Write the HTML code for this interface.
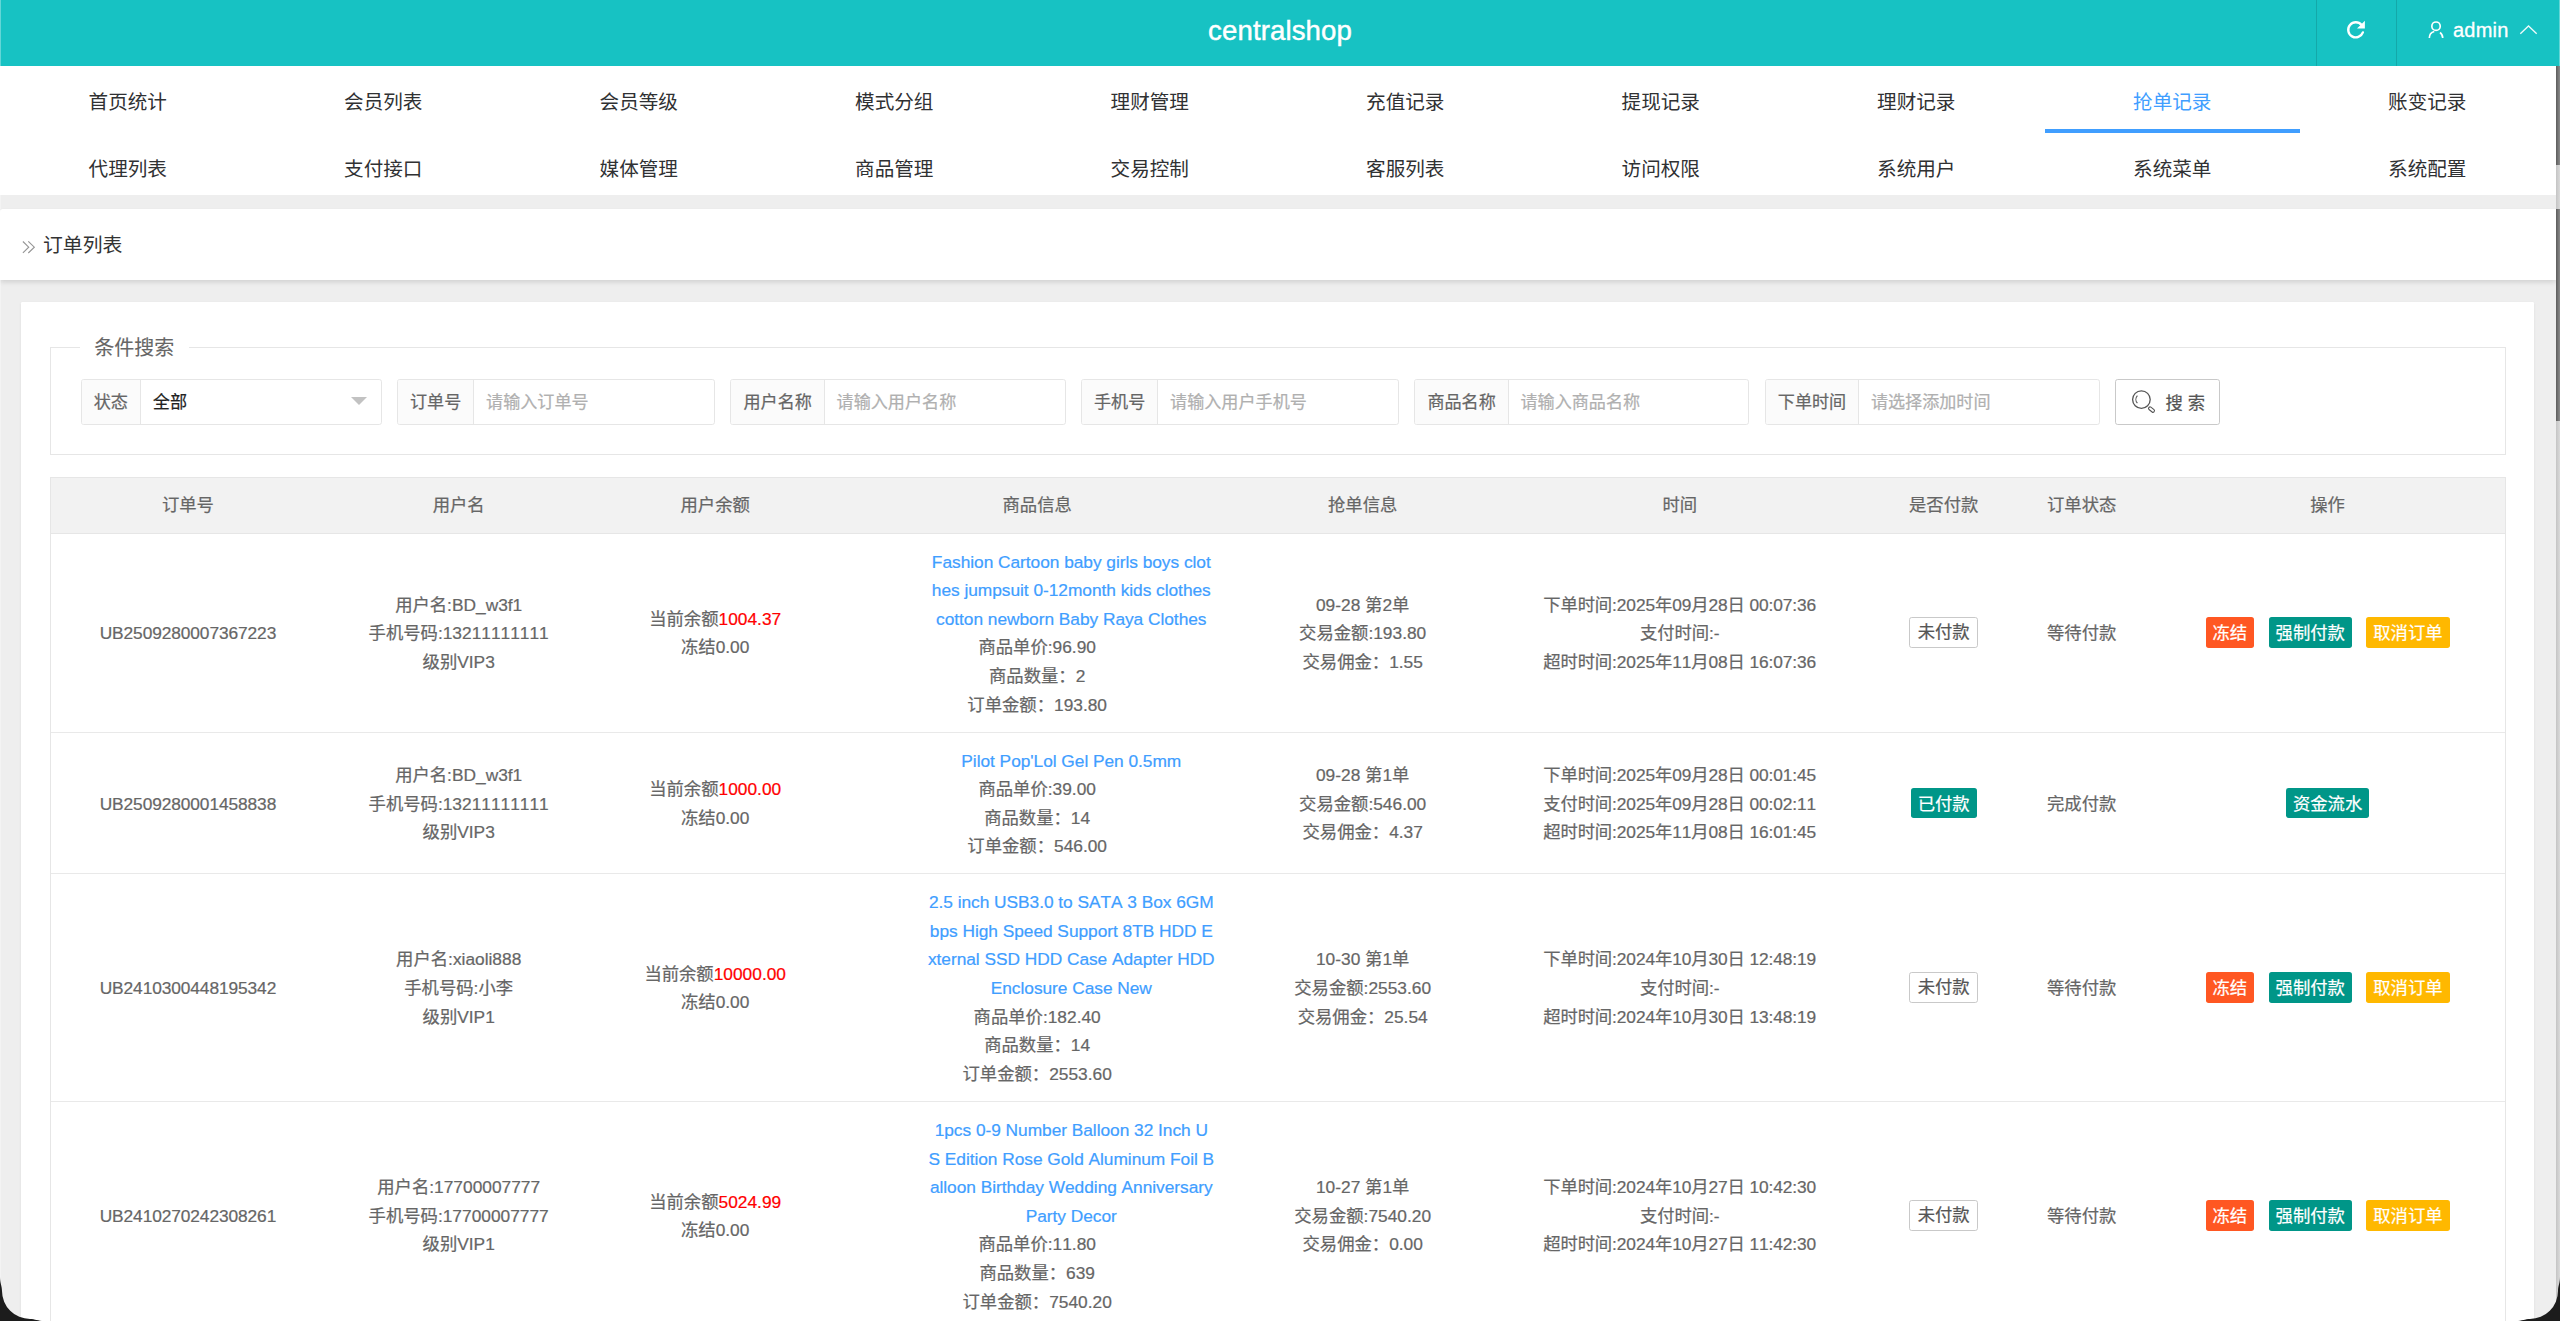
<!DOCTYPE html>
<html lang="zh-CN">
<head>
<meta charset="utf-8">
<title>centralshop</title>
<style>
*{box-sizing:border-box;margin:0;padding:0}
html,body{width:2560px;height:1321px;overflow:hidden}
body{position:relative;background:#eeeeee;font-family:"Liberation Sans","Noto Sans CJK SC",sans-serif;color:#666;font-size:17.33px;font-kerning:none;-webkit-text-stroke:.22px currentColor}
a{text-decoration:none}
/* header */
.hd{position:absolute;left:0;top:0;width:2560px;height:65.7px;background:#17c2c3}
.hd .ttl{position:absolute;left:0;width:2560px;top:0;height:65.7px;line-height:61px;text-align:center;color:#fff;font-size:27.6px;letter-spacing:.1px;-webkit-text-stroke:.45px #fff}
.hd .sep{position:absolute;top:0;width:1.4px;height:65.7px;background:rgba(0,0,0,.13)}
.hd .adm{position:absolute;left:2453px;top:0;height:65.7px;line-height:61.5px;color:#fff;font-size:20px;letter-spacing:.2px;-webkit-text-stroke:.3px #fff}
.hd svg{position:absolute;overflow:visible}
/* nav */
.nav{position:absolute;left:0;top:65.7px;width:2556px;height:129.3px;background:#fff;overflow:hidden}
.nav .it{position:absolute;width:255.5px;height:67.4px;line-height:72px;text-align:center;font-size:19.6px;color:#303133}
.nav .it.on{color:#409eff}
.nav .it.on:after{content:"";position:absolute;left:0;bottom:0;width:100%;height:4.2px;background:#409eff}
/* scrollbars */
.sb{position:absolute;left:2556px;width:4px}.sb.t{background:linear-gradient(90deg,#c4c4c4,#dadada)}.sb.h{background:linear-gradient(90deg,#5c5c5c,#8c8c8c)}
/* crumb */
.crumb{position:absolute;left:0;top:208.8px;width:2556px;height:71.2px;background:#fff;border-radius:2.7px 0 0 0;box-shadow:0 1.5px 5.5px rgba(0,0,0,.13);clip-path:inset(0 0 -14px 0)}
.crumb .tx{position:absolute;left:43px;top:0;height:71.2px;line-height:72.4px;font-size:19.85px;color:#333}
.crumb svg{position:absolute;overflow:visible}
/* card */
.card{position:absolute;left:21.3px;top:301.9px;width:2512.7px;height:1100px;background:#fff;border-radius:1.2px;box-shadow:0 1.3px 3px rgba(0,0,0,.07)}
.fs{position:absolute;left:50.2px;top:347px;width:2455.6px;height:107.6px;border:1.35px solid #e6e6e6}
.lg{position:absolute;left:80px;top:330px;width:108.7px;height:36px;line-height:37px;background:#fff;text-align:center;font-size:20px;color:#666}
.grp{position:absolute;top:379.3px;height:45.4px;border:1.35px solid #e6e6e6;border-radius:2.7px;background:#fff;overflow:hidden}
.grp .lb{position:absolute;left:0;top:0;height:100%;background:#fbfbfb;border-right:1.35px solid #e6e6e6;text-align:center;line-height:46.6px;color:#666;white-space:nowrap;font-size:17.1px}
.grp .ph{position:absolute;top:0;height:100%;line-height:46.6px;color:#b0b0b0;white-space:nowrap;font-size:17.1px}
.grp .val{position:absolute;top:0;height:100%;line-height:46.6px;color:#222;white-space:nowrap;font-size:17.1px}
.tri{position:absolute;width:0;height:0;border-left:8px solid transparent;border-right:8px solid transparent;border-top:8.5px solid #c2c2c2}
.sbtn{position:absolute;left:2115.2px;top:379.3px;width:104.8px;height:45.4px;border:1.35px solid #c9c9c9;border-radius:2.7px;background:#fff;color:#555}
.sbtn span{position:absolute;left:49.3px;top:0;line-height:46.6px;white-space:pre}
.sbtn svg{position:absolute;overflow:visible}
/* table */
.tb{position:absolute;left:50.2px;top:477.1px;width:2455.6px;height:900px;border:1.35px solid #e6e6e6;border-bottom:0}
.tr{display:flex;align-items:center;width:100%;border-bottom:1.35px solid #e9e9e9;line-height:28.6px}
.th{height:56.4px;background:#f2f2f2;border-bottom:1.35px solid #e6e6e6}
.tr>div{flex:none;text-align:center;white-space:nowrap}
.c1{width:273.5px;letter-spacing:-.1px}.c2{width:268px}.c3{width:245px}.c4{width:399px}.c5{width:250px;padding-left:2px}.c6{width:386px;letter-spacing:-.1px}.c7{width:142px}.c8{width:134px}.c9{width:355.4px;padding-left:2.4px}
.r2>div{padding-top:1px}.r3>div{padding-top:1.6px}.r4>div{padding-top:2px}
.nav .it,.crumb .tx{-webkit-text-stroke:0}.lg{-webkit-text-stroke:.1px currentColor}
.red{color:#ff0000}
.lk{display:block;margin-left:88.3px;width:290.6px;color:#409eff;letter-spacing:-.04px}
.b{display:inline-block;height:30.7px;line-height:32.2px;padding:0 7px;border-radius:2.7px;color:#fff;vertical-align:middle;font-size:17.33px;position:relative;top:-1px}
.b+.b{margin-left:14.4px}
.b.o{background:#ff5722}.b.g{background:#009688}.b.y{background:#ffb800}
.b.w{background:#fff;border:1.35px solid #c9c9c9;color:#555;line-height:29.6px;padding:0 7.3px}
.corner{position:absolute;bottom:0;width:44px;height:44px}
</style>
</head>
<body>
<!-- HEADER -->
<div class="hd">
  <div class="ttl">centralshop</div>
  <div class="sep" style="left:2315.9px"></div>
  <div class="sep" style="left:2395.8px"></div>
  <svg style="left:2346px;top:20px" width="20" height="20" viewBox="0 0 20 20"><path d="M15.58 4.95A7.55 7.55 0 1 0 16.89 12.38" fill="none" stroke="#fff" stroke-width="2.4" stroke-linecap="round"/><path d="M18.9 .7V8.6H11z" fill="#fff"/></svg>
  <svg style="left:2427px;top:20px" width="18" height="19" viewBox="0 0 18 19"><circle cx="9.03" cy="6.17" r="4.2" fill="none" stroke="#fff" stroke-width="1.65"/><path d="M2.33 17.9A6.7 6.7 0 0 1 7.3 11.43M12.97 12.48A6.7 6.7 0 0 1 15.73 17.9" fill="none" stroke="#fff" stroke-width="1.65"/></svg>
  <div class="adm">admin</div>
  <svg style="left:2519px;top:25px" width="19" height="10" viewBox="0 0 19 10"><path d="M1.3 8.7L9.5 1L17.7 8.7" fill="none" stroke="#fff" stroke-opacity=".92" stroke-width="1.35"/></svg>
</div>
<!-- NAV -->
<div class="nav">
  <div class="it" style="left:0;top:0">首页统计</div>
  <div class="it" style="left:255.5px;top:0">会员列表</div>
  <div class="it" style="left:511px;top:0">会员等级</div>
  <div class="it" style="left:766.5px;top:0">模式分组</div>
  <div class="it" style="left:1022px;top:0">理财管理</div>
  <div class="it" style="left:1277.5px;top:0">充值记录</div>
  <div class="it" style="left:1533px;top:0">提现记录</div>
  <div class="it" style="left:1788.5px;top:0">理财记录</div>
  <div class="it on" style="left:2044.5px;top:0">抢单记录</div>
  <div class="it" style="left:2299.5px;top:0">账变记录</div>
  <div class="it" style="left:0;top:67.2px">代理列表</div>
  <div class="it" style="left:255.5px;top:67.2px">支付接口</div>
  <div class="it" style="left:511px;top:67.2px">媒体管理</div>
  <div class="it" style="left:766.5px;top:67.2px">商品管理</div>
  <div class="it" style="left:1022px;top:67.2px">交易控制</div>
  <div class="it" style="left:1277.5px;top:67.2px">客服列表</div>
  <div class="it" style="left:1533px;top:67.2px">访问权限</div>
  <div class="it" style="left:1788.5px;top:67.2px">系统用户</div>
  <div class="it" style="left:2044.5px;top:67.2px">系统菜单</div>
  <div class="it" style="left:2299.5px;top:67.2px">系统配置</div>
</div>
<!-- scrollbars -->
<div class="sb t" style="top:65.7px;height:143.4px"></div>
<div class="sb h" style="top:65.7px;height:99.1px"></div>
<div class="sb t" style="top:209.1px;height:1112px"></div>
<div class="sb h" style="top:209.1px;height:212.1px"></div>
<!-- BREADCRUMB -->
<div class="crumb">
  <svg style="left:22px;top:30.9px" width="13" height="14" viewBox="0 0 13 14"><path d="M.9 1.5L6.7 7.2L.9 12.9M6.3 1.3L12.3 7.2L6.3 13" fill="none" stroke="#969696" stroke-width="1.15"/></svg>
  <div class="tx">订单列表</div>
</div>
<!-- CARD -->
<div class="card"></div>
<div class="fs"></div>
<div class="lg">条件搜索</div>
<div class="grp" style="left:80.5px;width:301.2px"><div class="lb" style="width:59.7px">状态</div><div class="val" style="left:71.3px">全部</div><div class="tri" style="left:269.5px;top:17.2px"></div></div>
<div class="grp" style="left:396.8px;width:318.4px"><div class="lb" style="width:76.6px">订单号</div><div class="ph" style="left:88.3px">请输入订单号</div></div>
<div class="grp" style="left:730.3px;width:335.3px"><div class="lb" style="width:93.8px">用户名称</div><div class="ph" style="left:105.3px">请输入用户名称</div></div>
<div class="grp" style="left:1080.8px;width:318.3px"><div class="lb" style="width:76.6px">手机号</div><div class="ph" style="left:88.3px">请输入用户手机号</div></div>
<div class="grp" style="left:1414.2px;width:335.3px"><div class="lb" style="width:93.8px">商品名称</div><div class="ph" style="left:105.3px">请输入商品名称</div></div>
<div class="grp" style="left:1764.6px;width:335.3px"><div class="lb" style="width:93.8px">下单时间</div><div class="ph" style="left:105.3px">请选择添加时间</div></div>
<div class="sbtn">
  <svg style="left:14.8px;top:8.8px" width="25" height="25" viewBox="0 0 25 25"><circle cx="10.4" cy="10.6" r="8.8" fill="none" stroke="#555" stroke-width="1.3"/><path d="M6.4 6.6a5.6 5.6 0 0 0 0 7.6" fill="none" stroke="#555" stroke-width="1.1"/><rect x="-3.3" y="-1.5" width="6.6" height="3" rx="1.3" transform="translate(20.5 20.6) rotate(39)" fill="none" stroke="#555" stroke-width="1.1"/></svg>
  <span>搜 索</span>
</div>
<!-- TABLE -->
<div class="tb">
  <div class="tr th"><div class="c1">订单号</div><div class="c2">用户名</div><div class="c3">用户余额</div><div class="c4">商品信息</div><div class="c5">抢单信息</div><div class="c6">时间</div><div class="c7">是否付款</div><div class="c8">订单状态</div><div class="c9">操作</div></div>
  <div class="tr" style="height:199px">
    <div class="c1">UB2509280007367223</div>
    <div class="c2">用户名:BD_w3f1<br>手机号码:13211111111<br>级别VIP3</div>
    <div class="c3">当前余额<span class="red">1004.37</span><br>冻结0.00</div>
    <div class="c4"><a class="lk">Fashion Cartoon baby girls boys clot<br>hes jumpsuit 0-12month kids clothes<br>cotton newborn Baby Raya Clothes</a>商品单价:96.90<br>商品数量：2<br>订单金额：193.80</div>
    <div class="c5">09-28 第2单<br>交易金额:193.80<br>交易佣金：1.55</div>
    <div class="c6">下单时间:2025年09月28日 00:07:36<br>支付时间:-<br>超时时间:2025年11月08日 16:07:36</div>
    <div class="c7"><span class="b w">未付款</span></div>
    <div class="c8">等待付款</div>
    <div class="c9"><span class="b o">冻结</span><span class="b g">强制付款</span><span class="b y">取消订单</span></div>
  </div>
  <div class="tr r2" style="height:140.7px">
    <div class="c1">UB2509280001458838</div>
    <div class="c2">用户名:BD_w3f1<br>手机号码:13211111111<br>级别VIP3</div>
    <div class="c3">当前余额<span class="red">1000.00</span><br>冻结0.00</div>
    <div class="c4"><a class="lk">Pilot Pop'Lol Gel Pen 0.5mm</a>商品单价:39.00<br>商品数量：14<br>订单金额：546.00</div>
    <div class="c5">09-28 第1单<br>交易金额:546.00<br>交易佣金：4.37</div>
    <div class="c6">下单时间:2025年09月28日 00:01:45<br>支付时间:2025年09月28日 00:02:11<br>超时时间:2025年11月08日 16:01:45</div>
    <div class="c7"><span class="b g">已付款</span></div>
    <div class="c8">完成付款</div>
    <div class="c9"><span class="b g">资金流水</span></div>
  </div>
  <div class="tr r3" style="height:227.5px">
    <div class="c1">UB2410300448195342</div>
    <div class="c2">用户名:xiaoli888<br>手机号码:小李<br>级别VIP1</div>
    <div class="c3">当前余额<span class="red">10000.00</span><br>冻结0.00</div>
    <div class="c4"><a class="lk">2.5 inch USB3.0 to SATA 3 Box 6GM<br>bps High Speed Support 8TB HDD E<br>xternal SSD HDD Case Adapter HDD<br>Enclosure Case New</a>商品单价:182.40<br>商品数量：14<br>订单金额：2553.60</div>
    <div class="c5">10-30 第1单<br>交易金额:2553.60<br>交易佣金：25.54</div>
    <div class="c6">下单时间:2024年10月30日 12:48:19<br>支付时间:-<br>超时时间:2024年10月30日 13:48:19</div>
    <div class="c7"><span class="b w">未付款</span></div>
    <div class="c8">等待付款</div>
    <div class="c9"><span class="b o">冻结</span><span class="b g">强制付款</span><span class="b y">取消订单</span></div>
  </div>
  <div class="tr r4" style="height:228px">
    <div class="c1">UB2410270242308261</div>
    <div class="c2">用户名:17700007777<br>手机号码:17700007777<br>级别VIP1</div>
    <div class="c3">当前余额<span class="red">5024.99</span><br>冻结0.00</div>
    <div class="c4"><a class="lk">1pcs 0-9 Number Balloon 32 Inch U<br>S Edition Rose Gold Aluminum Foil B<br>alloon Birthday Wedding Anniversary<br>Party Decor</a>商品单价:11.80<br>商品数量：639<br>订单金额：7540.20</div>
    <div class="c5">10-27 第1单<br>交易金额:7540.20<br>交易佣金：0.00</div>
    <div class="c6">下单时间:2024年10月27日 10:42:30<br>支付时间:-<br>超时时间:2024年10月27日 11:42:30</div>
    <div class="c7"><span class="b w">未付款</span></div>
    <div class="c8">等待付款</div>
    <div class="c9"><span class="b o">冻结</span><span class="b g">强制付款</span><span class="b y">取消订单</span></div>
  </div>
</div>
<div style="position:absolute;left:0;top:0;width:1px;height:1321px;background:rgba(255,255,255,.33)"></div>
<div style="position:absolute;left:2559px;top:0;width:1px;height:66px;background:rgba(255,255,255,.33)"></div>
<!-- window corners -->
<svg class="corner" style="left:0" viewBox="0 0 44 44"><path d="M0 0C0 6 2 9 2 14A28 28 0 0 0 30 42C35 42 38 44 44 44L0 44Z" fill="#1c1c1c"/></svg>
<svg class="corner" style="right:0" viewBox="0 0 44 44"><path d="M44 0C44 6 42 9 42 14A28 28 0 0 1 14 42C9 42 6 44 0 44L44 44Z" fill="#1c1c1c"/></svg>
</body>
</html>
